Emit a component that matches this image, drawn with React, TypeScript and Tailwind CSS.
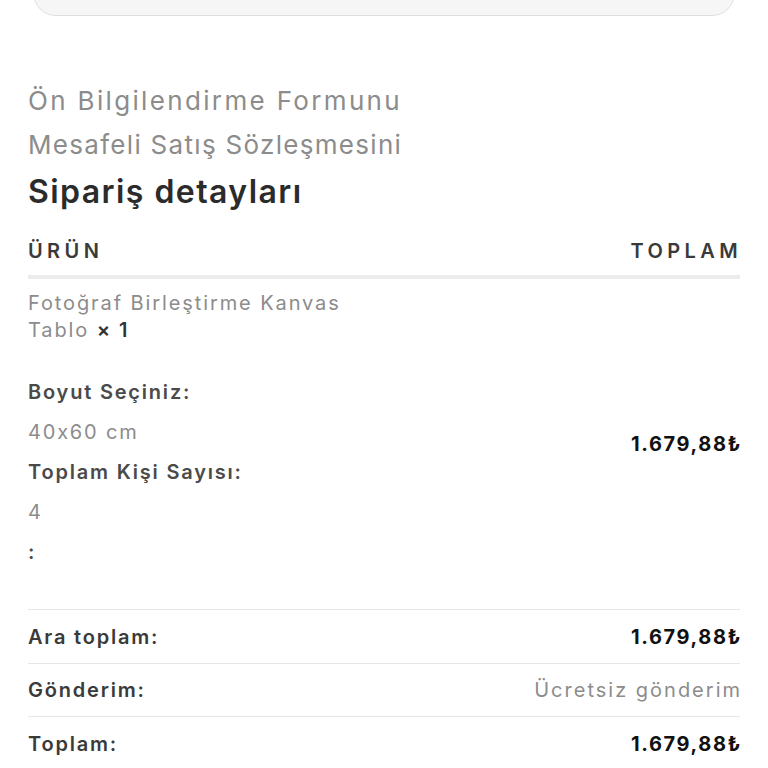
import React from "react";

const font = { fontFamily: "Inter, 'Noto Sans', sans-serif" };

export default function App() {
  return (
    <div className="min-h-[768px] w-[768px] bg-white overflow-hidden" style={font}>
      <div className="px-[33px]">
        <div className="-mt-[30px] h-[46px] rounded-[24px] border border-[#dedede] bg-[#f6f6f6]" />
      </div>
      <div className="px-[28px]">
        <div className="mt-[63px] text-[26px] leading-[44px] text-[#8c8c8c]">
          <div className="tracking-[0.09em]">Ön Bilgilendirme Formunu</div>
          <div className="tracking-[0.05em]">Mesafeli Satış Sözleşmesini</div>
        </div>
        <h2 className="mt-[3px] text-[32px] leading-[44px] font-semibold text-[#2b2b2b] tracking-[0.045em]">
          Sipariş detayları
        </h2>

        <div className="mt-[22px] flex items-center justify-between border-b-4 border-[#ececec] pb-[8px] text-[20px] leading-[31px] font-semibold uppercase tracking-[0.22em] text-[#3a3a3a]">
          <span>Ürün</span>
          <span className="-mr-[2px]">Toplam</span>
        </div>

        <div className="flex items-center justify-between border-b border-[#e6e6e6]">
          <div className="pt-[11px] pb-[37px]">
            <div className="text-[20px] leading-[27px] text-[#8c8c8c] tracking-[0.095em]">
              <div>Fotoğraf Birleştirme Kanvas</div>
              <div>
                Tablo <strong className="font-semibold text-[#333]">× 1</strong>
              </div>
            </div>
            <div className="mt-[28px] text-[20px] leading-[40px] tracking-[0.09em]">
              <div className="font-semibold text-[#4a4a4a]">Boyut Seçiniz:</div>
              <div className="text-[#8c8c8c]">40x60 cm</div>
              <div className="font-semibold text-[#4a4a4a]">Toplam Kişi Sayısı:</div>
              <div className="text-[#8c8c8c]">4</div>
              <div className="font-semibold text-[#4a4a4a]">:</div>
            </div>
          </div>
          <div className="-mr-[2px] text-[20px] font-bold text-[#111] tracking-[0.08em]">1.679,88₺</div>
        </div>

        <div className="flex h-[54px] items-center justify-between border-b border-[#e6e6e6] text-[20px] tracking-[0.09em]">
          <span className="font-semibold text-[#3a3a3a]">Ara toplam:</span>
          <span className="-mr-[2px] font-bold text-[#111] tracking-[0.08em]">1.679,88₺</span>
        </div>
        <div className="flex h-[53px] items-center justify-between border-b border-[#e6e6e6] text-[20px] tracking-[0.09em]">
          <span className="font-semibold text-[#3a3a3a]">Gönderim:</span>
          <span className="-mr-[2px] text-[#8c8c8c] tracking-[0.1em]">Ücretsiz gönderim</span>
        </div>
        <div className="flex h-[54px] items-center justify-between text-[20px] tracking-[0.09em]">
          <span className="font-semibold text-[#3a3a3a]">Toplam:</span>
          <span className="-mr-[2px] font-bold text-[#111] tracking-[0.08em]">1.679,88₺</span>
        </div>
      </div>
    </div>
  );
}
